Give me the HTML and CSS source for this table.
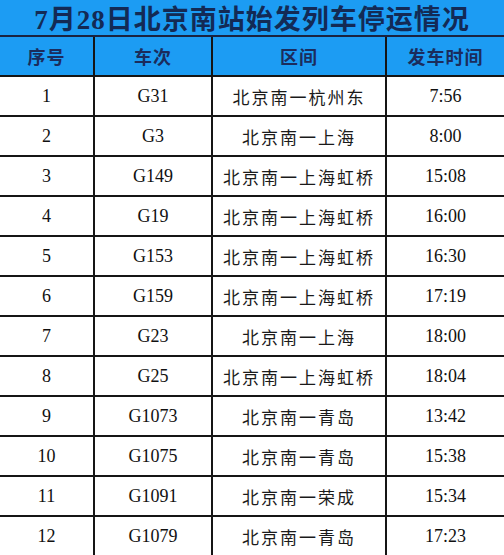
FILE: index.html
```html
<!DOCTYPE html>
<html lang="zh-CN">
<head>
<meta charset="utf-8">
<link rel="stylesheet" href="styles.css">
</head>
<body>
<div class="title">7月28日北京南站始发列车停运情况</div>
<table class="grid">
  <colgroup>
    <col class="c1"><col class="c2"><col class="c3"><col class="c4">
  </colgroup>
  <thead>
    <tr><th>序号</th><th>车次</th><th>区间</th><th>发车时间</th></tr>
  </thead>
  <tbody>
    <tr><td>1</td><td>G31</td><td class="route">北京南一杭州东</td><td>7:56</td></tr>
    <tr><td>2</td><td>G3</td><td class="route">北京南一上海</td><td>8:00</td></tr>
    <tr><td>3</td><td>G149</td><td class="route">北京南一上海虹桥</td><td>15:08</td></tr>
    <tr><td>4</td><td>G19</td><td class="route">北京南一上海虹桥</td><td>16:00</td></tr>
    <tr><td>5</td><td>G153</td><td class="route">北京南一上海虹桥</td><td>16:30</td></tr>
    <tr><td>6</td><td>G159</td><td class="route">北京南一上海虹桥</td><td>17:19</td></tr>
    <tr><td>7</td><td>G23</td><td class="route">北京南一上海</td><td>18:00</td></tr>
    <tr><td>8</td><td>G25</td><td class="route">北京南一上海虹桥</td><td>18:04</td></tr>
    <tr><td>9</td><td>G1073</td><td class="route">北京南一青岛</td><td>13:42</td></tr>
    <tr><td>10</td><td>G1075</td><td class="route">北京南一青岛</td><td>15:38</td></tr>
    <tr><td>11</td><td>G1091</td><td class="route">北京南一荣成</td><td>15:34</td></tr>
    <tr><td>12</td><td>G1079</td><td class="route">北京南一青岛</td><td>17:23</td></tr>
  </tbody>
</table>
</body>
</html>
```
FILE: styles.css
```css
html, body {
  margin: 0;
  padding: 0;
  background: #ffffff;
}
body {
  width: 504px;
  overflow: hidden;
  font-family: "Liberation Serif", "Noto Sans CJK SC", serif;
  color: #111111;
}
.title {
  height: 29px;
  padding-top: 6px;
  border-bottom: 2px solid #1a2340;
  background: #1c9cf3;
  color: #132a55;
  font-family: "Liberation Serif", "Noto Sans CJK SC", serif;
  font-weight: bold;
  font-size: 27px;
  letter-spacing: 1px;
  line-height: 29px;
  text-align: center;
  white-space: nowrap;
  overflow: hidden;
}
.grid {
  width: 504px;
  border-collapse: separate;
  border-spacing: 0;
  table-layout: fixed;
}
.c1 { width: 95px; }
.c2 { width: 118px; }
.c3 { width: 174px; }
.c4 { width: 117px; }
.grid th, .grid td {
  padding: 0;
  text-align: center;
  vertical-align: middle;
  border-bottom: 2px solid #151515;
  border-right: 2px solid #151515;
  white-space: nowrap;
}
.grid th:last-child, .grid td:last-child {
  border-right: none;
}
.grid th {
  height: 38px;
  background: #1c9cf3;
  color: #1b2c5c;
  font-family: "Noto Sans CJK SC", sans-serif;
  font-weight: bold;
  font-size: 18px;
  letter-spacing: 1px;
}
.grid td {
  height: 38px;
  font-size: 18px;
}
.grid td.route {
  font-family: "Noto Sans CJK SC", sans-serif;
  font-size: 17px;
  letter-spacing: 2px;
  color: #1a1a1a;
}
```
